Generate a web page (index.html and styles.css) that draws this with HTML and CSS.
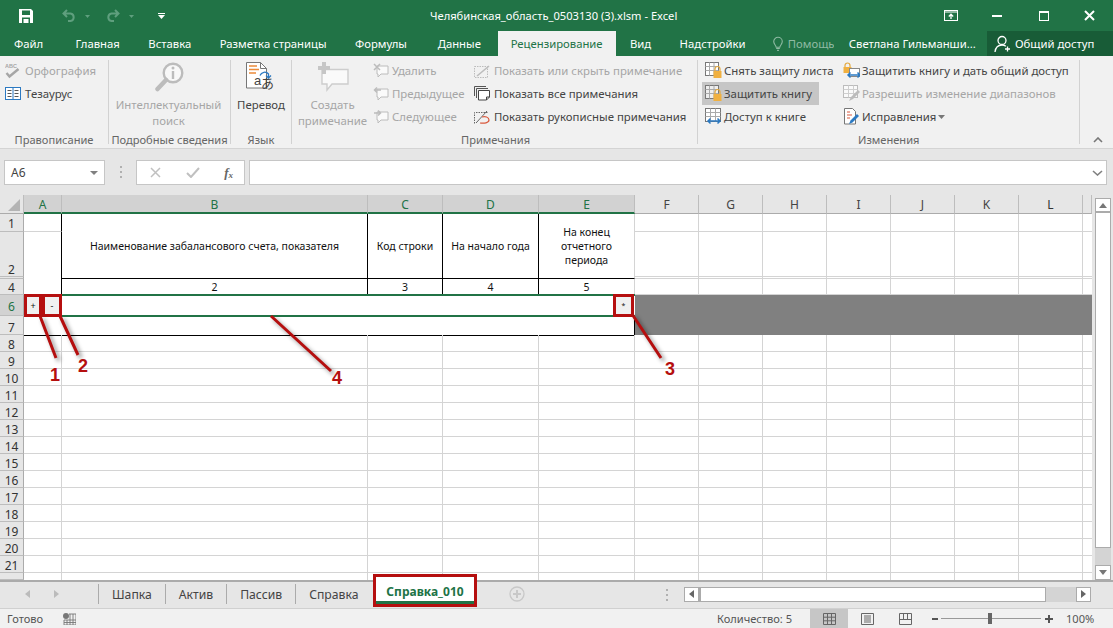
FILE: index.html
```html
<!DOCTYPE html>
<html lang="ru">
<head>
<meta charset="utf-8">
<title>Excel</title>
<link rel="stylesheet" href="styles.css">
</head>
<body>
<div class="app">
  <header class="titlebar">
    <div class="qat">
      <svg class="q-save" width="14" height="14" viewBox="0 0 14 14"><path d="M0 0h12l2 2v12H0z" fill="#fff"/><rect x="3" y="1.5" width="8" height="4.5" fill="#217346"/><rect x="3" y="8.5" width="8" height="5.5" fill="#217346"/><rect x="4.5" y="10" width="5" height="4" fill="#fff"/></svg>
      <svg class="q-undo" width="14" height="13" viewBox="0 0 14 13"><path d="M5 1L1.5 4.5 5 8M2 4.5h6.5a3.8 3.8 0 0 1 0 7.5H6" fill="none" stroke="#5f9f7e" stroke-width="2"/></svg>
      <svg class="q-caret" width="5" height="3" viewBox="0 0 5 3"><path d="M0 0h5L2.5 3z" fill="#5f9f7e"/></svg>
      <svg class="q-redo" width="14" height="13" viewBox="0 0 14 13"><path d="M9 1l3.500 3.500L9 8M12 4.500H5.500a3.800 3.800 0 0 0 0 7.500H8" fill="none" stroke="#5f9f7e" stroke-width="2"/></svg>
      <svg class="q-caret" width="5" height="3" viewBox="0 0 5 3"><path d="M0 0h5L2.5 3z" fill="#5f9f7e"/></svg>
      <svg class="q-more" width="7" height="6" viewBox="0 0 7 6"><path d="M0 0h7v1H0zM0 2h7L3.500 6z" fill="#fff"/></svg>
    </div>
    <div class="doc-title">Челябинская_область_0503130 (3).xlsm - Excel</div>
    <div class="win">
      <span class="win-btn"><svg width="14" height="11" viewBox="0 0 14 11"><rect x=".5" y=".5" width="13" height="10" fill="none" stroke="#fff"/><path d="M1 2h12" stroke="#fff"/><path d="M7 9V4.500M4.800 6.500L7 4.200l2.200 2.300" fill="none" stroke="#fff" stroke-width="1.300"/></svg></span>
      <span class="win-btn"><svg width="10" height="2" viewBox="0 0 10 2"><rect width="10" height="2" fill="#fff"/></svg></span>
      <span class="win-btn"><svg width="10" height="10" viewBox="0 0 10 10"><rect x=".5" y=".5" width="9" height="9" fill="none" stroke="#fff"/><rect width="10" height="2" fill="#fff"/></svg></span>
      <span class="win-btn"><svg width="11" height="11" viewBox="0 0 11 11"><path d="M1 1l9 9M10 1l-9 9" stroke="#fff" stroke-width="2"/></svg></span>
    </div>
  </header>

  <nav class="tabs">
    <span class="tab tab-file">Файл</span>
    <span class="tab">Главная</span>
    <span class="tab">Вставка</span>
    <span class="tab">Разметка страницы</span>
    <span class="tab tab-wide">Формулы</span>
    <span class="tab">Данные</span>
    <span class="tab tab-active">Рецензирование</span>
    <span class="tab">Вид</span>
    <span class="tab">Надстройки</span>
    <span class="tab tab-help">
      <svg width="11" height="16" viewBox="0 0 11 16"><path d="M3.500 11.500C3 9 .8 8 .8 5.300a4.700 4.700 0 0 1 9.400 0C10.200 8 8 9 7.500 11.500z" fill="none" stroke="#8fbaa3" stroke-width="1.200"/><path d="M3.500 13h4M4.500 15h2" stroke="#8fbaa3" stroke-width="1.200"/></svg>
      <span class="help-text">Помощь</span>
    </span>
    <span class="user">Светлана Гильманши...</span>
    <span class="share">
      <svg width="18" height="18" viewBox="0 0 18 18"><circle cx="8" cy="5.500" r="4" fill="none" stroke="#fff" stroke-width="1.300"/><path d="M1 17c.5-4 3-7 7-7 1.500 0 2.800.4 3.800 1.200" fill="none" stroke="#fff" stroke-width="1.300"/><path d="M13.500 11.500v5M11 14h5" stroke="#fff" stroke-width="1.300"/></svg>
      Общий доступ
    </span>
  </nav>

  <section class="ribbon">
    <div class="group g1">
      <div class="g-body col-first">
        <div class="col">
          <div class="sb off"><svg class="ic" width="16" height="17" viewBox="0 0 16 17"><text x="0" y="5.500" class="abc">ABC</text><path d="M1.500 11l3 3.500L13.500 7" fill="none" stroke="#a6a6a6" stroke-width="2.400"/></svg>Орфография</div>
          <div class="sb"><svg class="ic" width="16" height="13" viewBox="0 0 16 13"><rect x=".5" y=".5" width="15" height="12" fill="#fff" stroke="#2b79c2"/><path d="M8 .5v12" stroke="#2b79c2"/><path d="M2.500 3.500h4M2.500 6.500h4M2.500 9.500h4M9.500 3.500h4M9.500 6.500h4M9.500 9.500h4" stroke="#555"/></svg>Тезаурус</div>
        </div>
      </div>
      <div class="g-label">Правописание</div>
    </div>

    <div class="group g2">
      <div class="g-body center g2-body">
        <div class="lb off">
          <div class="lb-ic"><svg width="30" height="30" viewBox="0 0 30 30"><circle cx="19" cy="11" r="9.300" fill="#f8f8f8" stroke="#bcbcbc" stroke-width="2.400"/><path d="M12 18L3.500 27" stroke="#bcbcbc" stroke-width="4.500" stroke-linecap="round"/><rect x="17.800" y="9" width="2.400" height="8" fill="#bcbcbc"/><circle cx="19" cy="6" r="1.500" fill="#bcbcbc"/></svg></div>
          <div>Интеллектуальный<br>поиск</div>
        </div>
      </div>
      <div class="g-label">Подробные сведения</div>
    </div>

    <div class="group g3">
      <div class="g-body center">
        <div class="lb">
          <div class="lb-ic"><svg width="30" height="30" viewBox="0 0 30 30"><path d="M.5 .5h14l6 6V26H.5z" fill="#fff" stroke="#777"/><path d="M14.500 .5v6h6" fill="none" stroke="#777"/><path d="M3 4h8M3 7.500h10M3 11h7" stroke="#ec8b3a" stroke-width="1.300"/><path d="M14 13.500a5 5 0 0 1 8.500-1.500l0 3" fill="none" stroke="#2b79c2" stroke-width="1.300"/><path d="M20 13.500l2.500 2.500 2.500-2.500" fill="none" stroke="#2b79c2" stroke-width="1.300"/><text x="8" y="23" class="ja-a">a</text><text x="15" y="26" class="ja">あ</text></svg></div>
          <div>Перевод</div>
        </div>
      </div>
      <div class="g-label">Язык</div>
    </div>

    <div class="group g4">
      <div class="g-body">
        <div class="lb off lb-create">
          <div class="lb-ic"><svg width="32" height="30" viewBox="0 0 32 30"><path d="M5 7.500h26V22H15l-5 6v-6H5z" fill="#fafafa" stroke="#cdcdcd" stroke-width="1.400"/><path d="M7 0v12M1 6h12" stroke="#c6c6c6" stroke-width="4"/></svg></div>
          <div>Создать<br>примечание</div>
        </div>
        <div class="col col-nav">
          <div class="sb off"><svg class="ic" width="16" height="16" viewBox="0 0 16 16"><path d="M4 3h11v8H8l-3 3v-3H4z" fill="#fafafa" stroke="#bcbcbc"/><path d="M1 1l6 6M7 1L1 7" stroke="#bcbcbc" stroke-width="1.500"/></svg>Удалить</div>
          <div class="sb off"><svg class="ic" width="16" height="16" viewBox="0 0 16 16"><path d="M4 3h11v8H8l-3 3v-3H4z" fill="#fafafa" stroke="#bcbcbc"/><path d="M8 4H2M4 1.500L1.500 4 4 6.500" fill="none" stroke="#bcbcbc" stroke-width="1.500"/></svg>Предыдущее</div>
          <div class="sb off"><svg class="ic" width="16" height="16" viewBox="0 0 16 16"><path d="M4 3h11v8H8l-3 3v-3H4z" fill="#fafafa" stroke="#bcbcbc"/><path d="M1 4h6M5 1.500L7.500 4 5 6.500" fill="none" stroke="#bcbcbc" stroke-width="1.500"/></svg>Следующее</div>
        </div>
        <div class="col col-show">
          <div class="sb off"><svg class="ic" width="16" height="14" viewBox="0 0 16 14"><rect x=".5" y="2.500" width="13" height="11" fill="none" stroke="#bcbcbc" stroke-dasharray="1.500 1"/><path d="M3 12L15 2" stroke="#bcbcbc" stroke-width="1.600"/></svg>Показать или скрыть примечание</div>
          <div class="sb"><svg class="ic" width="16" height="15" viewBox="0 0 16 15"><path d="M.5 10V.5H12M2.500 12V2.500H14" fill="none" stroke="#555"/><path d="M4.500 4.500h11V11l-3 3h-8z" fill="#fff" stroke="#444"/><path d="M12.500 14v-3h3" fill="none" stroke="#444"/></svg>Показать все примечания</div>
          <div class="sb"><svg class="ic" width="16" height="15" viewBox="0 0 16 15"><path d="M.5 14.500v-11h14" fill="none" stroke="#666" stroke-dasharray="1.500 1"/><path d="M2 14L13 2" stroke="#666"/><path d="M8 8c3-1 7 0 7 3 0 3-5 3.500-9 3" fill="none" stroke="#d9593d" stroke-width="1.200"/></svg>Показать рукописные примечания</div>
        </div>
      </div>
      <div class="g-label g4-label">Примечания</div>
    </div>

    <div class="group g5">
      <div class="g-body">
        <div class="col col-prot">
          <div class="sb"><svg class="ic" width="18" height="17" viewBox="0 0 18 17"><rect x=".5" y=".5" width="13" height="13" fill="#fff" stroke="#777"/><path d="M.5 4.500h13M.5 8.500h13M4.500.5v13M9 .5v13" stroke="#aaa"/><path d="M10 9V7a2.500 2.500 0 0 1 5 0v2" fill="none" stroke="#e3a83d" stroke-width="1.200"/><rect x="8.500" y="9" width="8" height="7" fill="#f0b040"/></svg>Снять защиту листа</div>
          <div class="sb sb-on"><svg class="ic" width="18" height="17" viewBox="0 0 18 17"><rect x=".5" y=".5" width="13" height="13" fill="#eee" stroke="#777"/><path d="M.5 4.500h13M.5 8.500h13M4.500.5v13M9 .5v13" stroke="#aaa"/><path d="M10 9V7a2.500 2.500 0 0 1 5 0v2" fill="none" stroke="#e3a83d" stroke-width="1.200"/><rect x="8.500" y="9" width="8" height="7" fill="#f0b040"/></svg>Защитить книгу</div>
          <div class="sb"><svg class="ic" width="18" height="17" viewBox="0 0 18 17"><rect x=".5" y=".5" width="15" height="13" fill="#fff" stroke="#777"/><path d="M.5 4.500h15M.5 8.500h15M5.500.5v13M10.500.5v13" stroke="#aaa"/><path d="M3 13h12M5.500 10.500L3 13l2.500 2.500M12.500 10.500L15 13l-2.500 2.500" fill="none" stroke="#2b79c2" stroke-width="1.500"/></svg>Доступ к книге</div>
        </div>
        <div class="col col-share">
          <div class="sb"><svg class="ic" width="17" height="17" viewBox="0 0 17 17"><path d="M2 5V3.500a2.500 2.500 0 0 1 5 0V5" fill="none" stroke="#e3a83d" stroke-width="1.200"/><rect x=".5" y="5" width="8" height="6" fill="#f0b040"/><rect x="6.500" y="6.500" width="10" height="8" fill="#fff" stroke="#888"/><path d="M5 13h12M7.500 10.500L5 13l2.500 2.500M14.500 10.500L17 13l-2.500 2.500" fill="none" stroke="#2b79c2" stroke-width="1.500"/></svg>Защитить книгу и дать общий доступ</div>
          <div class="sb off"><svg class="ic" width="17" height="17" viewBox="0 0 17 17"><rect x=".5" y=".5" width="14" height="12" fill="#fafafa" stroke="#bcbcbc"/><path d="M.5 4.500h14M.5 8.500h14M5.500.5v12M10.500.5v12" stroke="#cfcfcf"/><path d="M6 16l2-4 7-7 2 2-7 7z" fill="#bcbcbc"/></svg>Разрешить изменение диапазонов</div>
          <div class="sb"><svg class="ic" width="17" height="17" viewBox="0 0 17 17"><path d="M1.500 .5h8l3 3V16h-11z" fill="#fff" stroke="#777"/><path d="M4 4h3M4 7h5M4 10h3" stroke="#d9593d" stroke-width="1.200"/><path d="M6 16l1.500-3.500 6.500-6.500 2 2-6.500 6.500z" fill="#2b79c2"/></svg>Исправления<svg class="caret" width="7" height="4" viewBox="0 0 7 4"><path d="M0 0h7L3.500 4z" fill="#777"/></svg></div>
        </div>
      </div>
      <div class="g-label g5-label">Изменения</div>
    </div>

    <div class="collapse"><svg width="10" height="6" viewBox="0 0 10 6"><path d="M1 5l4-4 4 4" fill="none" stroke="#777" stroke-width="1.600"/></svg></div>
  </section>

  <section class="fbar">
    <div class="namebox"><span>A6</span><svg width="8" height="4" viewBox="0 0 8 4"><path d="M0 0h8L4 4z" fill="#808080"/></svg></div>
    <div class="grip"></div>
    <div class="fx-tools">
      <svg width="11" height="11" viewBox="0 0 11 11"><path d="M1 1l9 9M10 1l-9 9" stroke="#c0c0c0" stroke-width="1.500"/></svg>
      <svg width="14" height="11" viewBox="0 0 14 11"><path d="M1 6l4 4 8-9" fill="none" stroke="#c0c0c0" stroke-width="2"/></svg>
      <span class="fx">f<sub>x</sub></span>
    </div>
    <div class="finput"><svg width="11" height="6" viewBox="0 0 11 6"><path d="M1 1l4.500 4L10 1" fill="none" stroke="#808080" stroke-width="1.600"/></svg></div>
  </section>

  <section class="workarea">
    <div class="sheet">
      <div class="corner"><svg width="12" height="12" viewBox="0 0 12 12"><path d="M12 0v12H0z" fill="#b4b4b4"/></svg></div>
      <div class="ch sel">A</div><div class="ch sel">B</div><div class="ch sel">C</div><div class="ch sel">D</div><div class="ch sel">E</div>
      <div class="ch">F</div><div class="ch">G</div><div class="ch">H</div><div class="ch">I</div><div class="ch">J</div><div class="ch">K</div><div class="ch ch-l">L</div><div class="ch"></div>

      <div class="rh r1">1</div>
      <div class="rh r2">2</div>
      <div class="rh r3"></div>
      <div class="rh r4">4</div>
      <div class="rh rh-sel r6">6</div>
      <div class="rh r7">7</div>

      <div class="free a1"></div>
      <div class="free a2"></div>
      <div class="free f1"></div>
      <div class="free f2"></div>
      <div class="free f3"></div>
      <div class="free f4"></div>

      <div class="tc tb">Наименование забалансового счета, показателя</div>
      <div class="tc tc-c">Код строки</div>
      <div class="tc tc-d">На начало года</div>
      <div class="tc tc-e">На конец<br>отчетного<br>периода</div>
      <div class="tn nb">2</div>
      <div class="tn nc">3</div>
      <div class="tn nd">4</div>
      <div class="tn ne">5</div>

      <div class="a6"><span class="mini mini-a">+</span><span class="mini mini-b">-</span></div>
      <div class="merged6"><span class="mini mini-c">*</span></div>
      <div class="merged7"></div>
      <div class="block"></div>

      <div class="rh">8</div><div class="rl"></div>
      <div class="rh">9</div><div class="rl"></div>
      <div class="rh">10</div><div class="rl"></div>
      <div class="rh">11</div><div class="rl"></div>
      <div class="rh">12</div><div class="rl"></div>
      <div class="rh">13</div><div class="rl"></div>
      <div class="rh">14</div><div class="rl"></div>
      <div class="rh">15</div><div class="rl"></div>
      <div class="rh">16</div><div class="rl"></div>
      <div class="rh">17</div><div class="rl"></div>
      <div class="rh">18</div><div class="rl"></div>
      <div class="rh">19</div><div class="rl"></div>
      <div class="rh">20</div><div class="rl"></div>
      <div class="rh">21</div><div class="rl"></div>
      <div class="rh rh-cut">22</div><div class="rl rl-cut"></div>
    </div>
    <div class="vscroll">
      <div class="vbtn vbtn-up"><svg width="8" height="5" viewBox="0 0 8 5"><path d="M0 5h8L4 0z" fill="#777"/></svg></div>
      <div class="vthumb"></div>
      <div class="vtrack"></div>
      <div class="vbtn"><svg width="8" height="5" viewBox="0 0 8 5"><path d="M0 0h8L4 5z" fill="#777"/></svg></div>
    </div>
    <svg class="notes" width="1113" height="200" viewBox="0 195 1113 200">
      <g class="note-shadow"><path d="M40 316L56 358M60 316L78 355M271 316L331 371M632 314L661 358"/></g>
      <text x="50" y="381" class="num">1</text>
      <text x="78" y="372" class="num">2</text>
      <text x="332" y="384" class="num">4</text>
      <text x="665" y="375" class="num">3</text>
    </svg>
  </section>

  <section class="sheetbar">
    <div class="nav">
      <svg width="5" height="8" viewBox="0 0 5 8"><path d="M5 0v8L0 4z" fill="#bbb"/></svg>
      <svg width="5" height="8" viewBox="0 0 5 8"><path d="M0 0v8l5-4z" fill="#bbb"/></svg>
    </div>
    <div class="sheets">
      <span class="st">Шапка</span>
      <span class="st">Актив</span>
      <span class="st">Пассив</span>
      <span class="st st-last">Справка</span>
      <span class="st-active">Справка_010</span>
    </div>
    <div class="add"><svg width="16" height="16" viewBox="0 0 16 16"><circle cx="8" cy="8" r="7" fill="none" stroke="#c8c8c8" stroke-width="1.300"/><path d="M8 4v8M4 8h8" stroke="#c8c8c8" stroke-width="2"/></svg></div>
    <div class="grip grip-h"></div>
    <div class="hscroll">
      <div class="hbtn"><svg width="5" height="8" viewBox="0 0 5 8"><path d="M5 0v8L0 4z" fill="#666"/></svg></div>
      <div class="hthumb"></div>
      <div class="htrack"></div>
      <div class="hbtn"><svg width="5" height="8" viewBox="0 0 5 8"><path d="M0 0v8l5-4z" fill="#666"/></svg></div>
    </div>
  </section>

  <footer class="status">
    <span class="ready">Готово</span>
    <svg class="macro" width="13" height="12" viewBox="0 0 13 12"><circle cx="3" cy="3" r="3" fill="#777"/><path d="M6 1h7v11H1V7h12M1 9.500h12M4 7v5M7 1v11M10 1v11" fill="none" stroke="#777" stroke-width=".9"/></svg>
    <span class="count">Количество: 5</span>
    <span class="view view-on"><svg width="13" height="12" viewBox="0 0 13 12"><path d="M.5.500h12v11H.5zM.5 4.200h12M.5 7.800h12M4.500.5v11M8.500.5v11" fill="none" stroke="#666"/></svg></span>
    <span class="view"><svg width="13" height="12" viewBox="0 0 13 12"><path d="M.5.500h12v11H.5z" fill="none" stroke="#666"/><path d="M3 3h7M3 5h7M3 7h7M3 9h7" stroke="#666"/></svg></span>
    <span class="view"><svg width="13" height="12" viewBox="0 0 13 12"><path d="M.5.500h12v11H.5zM.5 6.500h12M4.500.5v6M8.500.5v6" fill="none" stroke="#666"/></svg></span>
    <span class="zoom-minus"></span>
    <span class="slider"><span class="knob"></span></span>
    <span class="zoom-plus"></span>
    <span class="pct">100%</span>
  </footer>
</div>
</body>
</html>
```

FILE: styles.css
```css
* { box-sizing: border-box; }
html, body { margin: 0; padding: 0; }
body { width: 1113px; height: 628px; overflow: hidden; font-family: "Noto Sans", "Open Sans", sans-serif; font-size: 11.4px; color: #444; background: #f1f1f1; }
.app { position: relative; width: 1113px; height: 628px; display: flex; flex-direction: column; }

/* title bar */
.titlebar { height: 31px; background: #217346; display: flex; align-items: center; color: #fff; }
.qat { width: 430px; display: flex; align-items: center; padding-left: 19px; flex: none; }
.q-undo { margin-left: 29px; }
.q-caret { margin-left: 9px; margin-top: 2px; }
.q-redo { margin-left: 16px; }
.q-more { margin-left: 24px; }
.doc-title { flex: 1; font-size: 11.15px; white-space: nowrap; }
.win { width: 185px; display: flex; flex: none; }
.win-btn { width: 46.25px; display: flex; justify-content: center; align-items: center; height: 31px; }

/* tabs */
.tabs { height: 25px; background: #217346; display: flex; align-items: center; color: #fff; font-size: 11.3px; white-space: nowrap; }
.tab { height: 25px; padding: 0 14.25px; display: flex; align-items: center; flex: none; }
.tab-file { padding: 0 16px 0 14px; margin-right: 2px; }
.tab-wide { padding-right: 16.5px; }
.tab-active { background: #f1f1f1; color: #217346; padding: 0 13px; margin: 0 0 0 2.5px; width: 118px; justify-content: center; }
.tab-help { gap: 5px; padding-left: 13px; padding-right: 0; width: 74px; overflow: hidden; }
.help-text { color: #8fbaa3; width: 46px; overflow: hidden; flex: none; }
.user { flex: 1; padding-left: 15px; }
.share { width: 126px; flex: none; height: 25px; background: #185c37; display: flex; align-items: center; gap: 3px; padding-left: 7px; }

/* ribbon */
.ribbon { height: 93px; background: #f1f1f1; border-bottom: 1px solid #d4d4d4; display: flex; padding-top: 4px; position: relative; }
.group { display: flex; flex-direction: column; height: 84px; border-right: 1px solid #d2d2d2; flex: none; }
.g1 { width: 109px; } .g2 { width: 122px; } .g3 { width: 61px; } .g4 { width: 406px; } .g5 { width: 382px; }
.g-body { height: 73px; display: flex; flex: none; }
.g-body.center { justify-content: center; }
.g2-body { padding-right: 2px; }
.g-label { height: 14px; flex: none; text-align: center; line-height: 14px; color: #666; white-space: nowrap; font-size: 11.1px; }
.g4-label { text-align: left; padding-left: 169px; }
.g5-label { text-align: left; padding-left: 160px; }
.col { display: flex; flex-direction: column; flex: none; margin-top: -1px; }
.col-first { padding-left: 5px; }
.sb { height: 23px; display: flex; align-items: center; white-space: nowrap; flex: none; }
.ic { flex: none; margin-right: 4px; }
.off { color: #a6a6a6; }
.lb { display: flex; flex-direction: column; align-items: center; text-align: center; line-height: 16px; white-space: nowrap; }
.lb-ic { height: 37px; display: flex; justify-content: center; align-items: flex-start; padding-top: 2px; }
.lb-create { width: 69px; margin-left: 6px; flex: none; }
.col-nav { margin-left: 6px; width: 101px; }
.col-nav .ic { margin-right: 3px; }
.col-prot { margin-left: 4px; width: 141px; }
.col-prot .sb { padding-left: 3px; padding-right: 7px; width: max-content; }
.col-prot .ic { margin-right: 1px; }
.sb-on { background: #c6c6c6; }
.col-share .ic { margin-right: 2px; }
.caret { margin-left: 2px; }
.collapse { flex: 1; display: flex; justify-content: center; align-items: flex-end; padding: 0 0 1px 3px; height: 84px; }
.abc { font-size: 5.5px; font-weight: 700; fill: #a6a6a6; font-family: "Liberation Sans", sans-serif; }
.ja-a { font-size: 13px; fill: #444; font-family: "Liberation Sans", sans-serif; }
.ja { font-size: 13px; fill: #444; font-family: "Noto Sans CJK JP", sans-serif; }

/* formula bar */
.fbar { height: 46px; background: #e6e6e6; display: flex; align-items: flex-start; padding: 11px 6px 0 4px; }
.namebox { width: 101px; height: 25px; background: #fff; border: 1px solid #c6c6c6; display: flex; align-items: center; justify-content: space-between; padding: 0 6px; font-size: 12px; flex: none; }
.grip { width: 2px; height: 12px; margin: 6px 14px 0 15px; background: repeating-linear-gradient(#b0b0b0 0 2px, transparent 2px 5px); flex: none; }
.fx-tools { width: 109px; height: 25px; background: #fff; border: 1px solid #c6c6c6; display: flex; align-items: center; padding: 0 11px 0 13px; justify-content: space-between; flex: none; }
.fx { font-family: "Liberation Serif", serif; font-style: italic; font-weight: 700; font-size: 13px; color: #666; line-height: 1; }
.fx sub { font-size: 9px; vertical-align: -1px; }
.finput { flex: 1; height: 25px; margin-left: 4px; background: #fff; border: 1px solid #c6c6c6; display: flex; align-items: center; justify-content: flex-end; padding-right: 3px; }

/* worksheet */
.workarea { height: 385px; display: flex; background: #e6e6e6; position: relative; }
.sheet {
  width: 1092px; height: 385px; overflow: hidden; flex: none; background-color: #fff; display: grid;
  grid-template-columns: 24px 38px 306px 75px 96px 96px repeat(7, 64px) 9px;
  grid-template-rows: 19px 18px 45px 2px 16px 21px 19px repeat(14, 17px) 7px;
  font-size: 11.5px; color: #222;
}
.corner { background: #e6e6e6; display: flex; justify-content: flex-end; align-items: flex-end; padding: 0 3px 2px 0; border-right: 1px solid #bdbdbd; border-bottom: 1px solid #ababab; }
.ch { background: #e6e6e6; border-right: 1px solid #bdbdbd; border-bottom: 1px solid #ababab; text-align: center; line-height: 19px; font-size: 12px; color: #444; }
.ch-l { color: #333; }
.ch.sel { background: #d2d2d2; color: #217346; border-bottom: 2px solid #217346; }
.rh { grid-column: 1; background: #e6e6e6; border-right: 1px solid #ababab; border-bottom: 1px solid #bdbdbd; display: flex; align-items: flex-end; justify-content: center; font-size: 12px; color: #333; line-height: 13px; overflow: hidden; }
.rh-sel { background: #d2d2d2; color: #217346; align-items: center; padding-top: 3px; }
.r1 { padding-bottom: 1px; }
.rh-cut { align-items: flex-start; padding-top: 4px; }
.rl { grid-column: 2 / -1; border-bottom: 1px solid #d4d4d4; background:
  linear-gradient(#d4d4d4, #d4d4d4) 37px 0 / 1px 100% no-repeat,
  linear-gradient(#d4d4d4, #d4d4d4) 343px 0 / 1px 100% no-repeat,
  linear-gradient(#d4d4d4, #d4d4d4) 418px 0 / 1px 100% no-repeat,
  linear-gradient(#d4d4d4, #d4d4d4) 514px 0 / 1px 100% no-repeat,
  linear-gradient(#d4d4d4, #d4d4d4) 610px 0 / 1px 100% no-repeat,
  linear-gradient(#d4d4d4, #d4d4d4) 674px 0 / 1px 100% no-repeat,
  linear-gradient(#d4d4d4, #d4d4d4) 738px 0 / 1px 100% no-repeat,
  linear-gradient(#d4d4d4, #d4d4d4) 802px 0 / 1px 100% no-repeat,
  linear-gradient(#d4d4d4, #d4d4d4) 866px 0 / 1px 100% no-repeat,
  linear-gradient(#d4d4d4, #d4d4d4) 930px 0 / 1px 100% no-repeat,
  linear-gradient(#d4d4d4, #d4d4d4) 994px 0 / 1px 100% no-repeat,
  linear-gradient(#d4d4d4, #d4d4d4) 1058px 0 / 1px 100% no-repeat; }
.rl-cut { border-bottom: 0; }
.r1 { grid-row: 2; } .r2 { grid-row: 3; } .r3 { grid-row: 4; } .r4 { grid-row: 5; } .r6 { grid-row: 6; } .r7 { grid-row: 7; }
.free { border-bottom: 1px solid #d4d4d4; }
.a1 { grid-row: 2; grid-column: 2; background: #fff; border-right: 1px solid #000; }
.a2 { grid-row: 3 / 6; grid-column: 2; border-bottom: 0; background: #fff; border-right: 1px solid #000; }
.f1, .f2, .f3, .f4 { grid-column: 7 / -1; background:
  linear-gradient(#d4d4d4, #d4d4d4) 63px 0 / 1px 100% no-repeat,
  linear-gradient(#d4d4d4, #d4d4d4) 127px 0 / 1px 100% no-repeat,
  linear-gradient(#d4d4d4, #d4d4d4) 191px 0 / 1px 100% no-repeat,
  linear-gradient(#d4d4d4, #d4d4d4) 255px 0 / 1px 100% no-repeat,
  linear-gradient(#d4d4d4, #d4d4d4) 319px 0 / 1px 100% no-repeat,
  linear-gradient(#d4d4d4, #d4d4d4) 383px 0 / 1px 100% no-repeat,
  linear-gradient(#d4d4d4, #d4d4d4) 447px 0 / 1px 100% no-repeat; }
.f1 { grid-row: 2; } .f2 { grid-row: 3; } .f3 { grid-row: 4; } .f4 { grid-row: 5; }
.tc { grid-row: 2 / 5; display: flex; align-items: center; justify-content: center; text-align: center; line-height: 14px; border-right: 1px solid #000; border-bottom: 1px solid #000; background: #fff; font-size: 10.5px; white-space: nowrap; color: #111; }
.tb { grid-column: 3; } .tc-c { grid-column: 4; } .tc-d { grid-column: 5; } .tc-e { grid-column: 6; border-right-color: #d4d4d4; }
.tn { grid-row: 5; text-align: center; border-right: 1px solid #000; background: #fff; font-size: 10.5px; line-height: 17px; color: #111; }
.nb { grid-column: 3; } .nc { grid-column: 4; } .nd { grid-column: 5; } .ne { grid-column: 6; border-right-color: #d4d4d4; }
.a6 { grid-row: 6; grid-column: 2; display: flex; }
.merged6 { grid-row: 6; grid-column: 3 / 7; display: flex; justify-content: flex-end; border-top: 2px solid #217346; border-bottom: 2px solid #217346; margin-top: -1px; margin-bottom: -1px; background: #fff; position: relative; }
.merged7 { grid-row: 7; grid-column: 2 / 7; border-bottom: 1px solid #000; border-right: 1px solid #000; background: #fff; margin-top: 1px; margin-bottom: -1px; }
.mini { background: #f0f0f0; border: 3px solid #b50f0f; display: flex; align-items: center; justify-content: center; font-size: 9px; color: #111; line-height: 1; height: 23px; margin-top: -1px; flex: none; }
.mini-a { width: 18px; }
.mini-b { width: 20px; }
.mini-c { width: 21px; margin-top: -2px; margin-right: 1px; font-size: 7px; }
.block { grid-row: 6 / 8; grid-column: 7 / -1; background: #808080; }
.vscroll { width: 21px; height: 385px; flex: none; background: #e6e6e6; padding: 3px 2px 0 3px; display: flex; flex-direction: column; }
.vbtn { height: 15px; background: #fff; border: 1px solid #ababab; display: flex; align-items: center; justify-content: center; flex: none; }
.vbtn-up { border-bottom: 2px solid #ababab; }
.vthumb { height: 335px; background: #fff; border: 1px solid #ababab; border-top: 0; flex: none; }
.vtrack { flex: 1; background: #d4d4d4; }
.notes { position: absolute; left: 0; top: 0; pointer-events: none; }
.note-shadow path { fill: none; stroke: #b50f0f; stroke-width: 3; }
.note-shadow { filter: drop-shadow(3px 3px 2px rgba(0,0,0,.45)); }
.num { font-family: "Liberation Sans", sans-serif; font-weight: 700; font-size: 18px; fill: #b50f0f; }

/* sheet tabs */
.sheetbar { height: 28px; background: #e6e6e6; border-top: 2px solid #ababab; display: flex; position: relative; align-items: center; padding-bottom: 2px; }
.nav { width: 99px; display: flex; gap: 24px; padding-left: 26px; flex: none; margin-left: -1px; }
.sheets { display: flex; align-items: center; height: 24px; flex: none; width: 393px; }
.st { height: 20px; border-left: 1px solid #ababab; padding: 0 13px; display: flex; align-items: center; color: #444; font-size: 12.2px; white-space: nowrap; flex: none; }
.st-active { position: absolute; left: 373px; top: -8px; width: 104px; height: 33px; border: 3px solid #b50f0f; background: #fff; color: #217346; font-weight: 700; font-size: 12px; display: flex; align-items: center; justify-content: center; box-shadow: inset 0 -3px 0 #217346; padding-top: 2px; }
.add { width: 50px; display: flex; align-items: center; flex: none; margin-left: 18px; }
.sheetbar .grip-h { position: absolute; left: 666px; top: 7px; margin: 0; }
.hscroll { width: 407px; height: 15px; display: flex; margin-left: 125px; flex: none; }
.hbtn { width: 15px; height: 15px; background: #fff; border: 1px solid #ababab; display: flex; align-items: center; justify-content: center; flex: none; }
.hthumb { width: 347px; background: #fff; border: 1px solid #ababab; border-left: 2px solid #ababab; flex: none; }
.htrack { flex: 1; background: #d4d4d4; }

/* status bar */
.status { flex: 1; background: #f1f1f1; border-top: 1px solid #d0d0d0; display: flex; align-items: center; font-size: 11.1px; color: #555; white-space: nowrap; }
.ready { margin-left: 7px; width: 56px; flex: none; }
.macro { flex: none; }
.count { margin-left: 641px; width: 93px; flex: none; }
.view { width: 38px; height: 19px; display: flex; align-items: center; justify-content: center; flex: none; }
.view-on { background: #c6c6c6; }
.zoom-minus { width: 6px; height: 2px; background: #555; margin-left: 8px; flex: none; }
.slider { width: 100px; height: 1px; background: #999; margin-left: 3px; position: relative; flex: none; }
.knob { position: absolute; left: 47px; top: -5px; width: 4px; height: 11px; background: #666; }
.zoom-plus { width: 8px; height: 8px; margin-left: 4px; flex: none; background: linear-gradient(#555,#555) center / 100% 2px no-repeat, linear-gradient(#555,#555) center / 2px 100% no-repeat; }
.pct { margin-left: 13px; }
```
